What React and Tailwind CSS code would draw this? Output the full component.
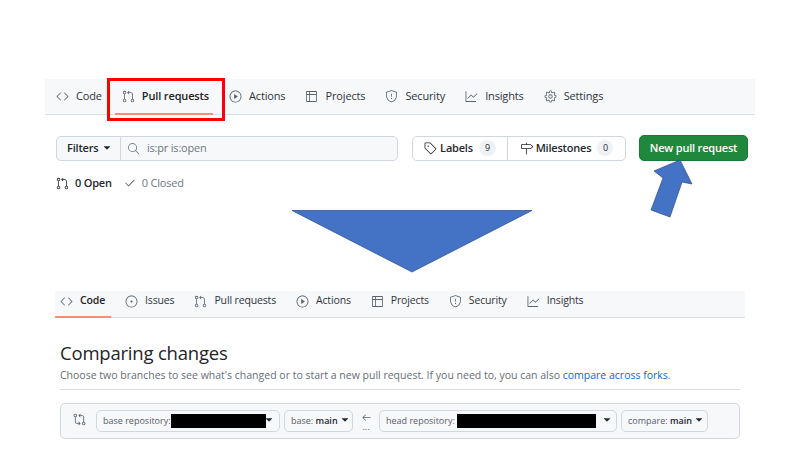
import React from "react";
import { GoCode, GoGitPullRequest, GoPlay, GoTable, GoShield, GoGraph, GoGear, GoIssueOpened, GoTag, GoMilestone, GoSearch, GoCheck, GoArrowLeft, GoGitCompare, GoTriangleDown } from "react-icons/go";

const Tab = ({ icon: Icon, label, bold, size = 13 }) => (
  <div className="flex items-center gap-[7px] text-[#2f353c] whitespace-nowrap">
    <Icon size={size} className="text-[#5a626b] shrink-0" />
    <span className={bold ? "font-semibold text-[#1f2328]" : ""}>{label}</span>
  </div>
);

const Caret = () => <GoTriangleDown size={12} className="text-[#24292f] shrink-0" />;
const SmallCaret = () => <GoTriangleDown size={12} className="text-[#24292f] shrink-0 -mt-[3px]" />;

export default function App() {
  return (
    <div className="relative w-[800px] h-[450px] bg-white overflow-hidden flex flex-col" style={{ fontFamily: '"Open Sans", "Noto Sans", sans-serif' }}>
      <section className="mt-[79px] mx-[45px] w-[710px]">
        <nav className="h-[36px] bg-[#f6f8fa] border-b border-[#d8dee4] flex items-center gap-[20px] pl-[11px] text-[11px] tracking-[-0.15px]">
          <Tab icon={GoCode} label="Code" />
          <Tab icon={GoGitPullRequest} label="Pull requests" bold />
          <Tab icon={GoPlay} label="Actions" />
          <Tab icon={GoTable} label="Projects" />
          <Tab icon={GoShield} label="Security" />
          <Tab icon={GoGraph} label="Insights" />
          <Tab icon={GoGear} label="Settings" />
        </nav>
        <div className="mt-[20px] flex items-center pl-[11px] text-[11px] tracking-[-0.2px] whitespace-nowrap">
          <div className="w-[342px] h-[25px] flex rounded-[5px] border border-[#d0d7de] bg-[#f6f8fa]">
            <div className="w-[64px] flex items-center gap-[3px] pl-[10px] border-r border-[#d0d7de] font-semibold text-[#24292f]">
              Filters <Caret />
            </div>
            <div className="flex items-center gap-[7px] pl-[6px] text-[#6e7781]">
              <GoSearch size={13} />
              <span>is:pr is:open</span>
            </div>
          </div>
          <div className="ml-[14px] w-[214px] h-[25px] flex rounded-[5px] border border-[#d0d7de] font-semibold text-[#24292f]">
            <div className="w-[95px] flex items-center justify-center gap-[3px] border-r border-[#d0d7de]">
              <GoTag size={13} />
              <span>Labels</span>
              <span className="ml-[3px] w-[17px] h-[16px] rounded-full bg-[#eff2f5] flex items-center justify-center text-[9px] font-normal">9</span>
            </div>
            <div className="flex-1 flex items-center justify-center gap-[3px]">
              <GoMilestone size={13} />
              <span>Milestones</span>
              <span className="ml-[3px] w-[16px] h-[16px] rounded-full bg-[#eff2f5] flex items-center justify-center text-[9px] font-normal">0</span>
            </div>
          </div>
          <button className="ml-[13px] w-[109px] h-[26px] rounded-[5px] bg-[#1f883d] text-white font-semibold border border-[#1c7a37]">New pull request</button>
        </div>
        <div className="mt-[13px] ml-[11px] flex items-center h-[18px] text-[11px] tracking-[-0.2px]">
          <GoGitPullRequest size={13} className="text-[#24292f]" />
          <span className="ml-[6px] font-semibold text-[#24292f]">0 Open</span>
          <GoCheck size={12} className="ml-[12px] text-[#5a626b]" />
          <span className="ml-[6px] text-[#6e7781]">0 Closed</span>
        </div>
      </section>

      <section className="mt-[99px] mx-[55px] w-[690px]">
        <nav className="h-[27px] bg-[#f6f8fa] border-b border-[#d8dee4] flex items-center gap-[20px] pl-[5px] text-[10.5px] tracking-[-0.15px] pb-[6px] relative">
          <Tab icon={GoCode} label="Code" bold />
          <Tab icon={GoIssueOpened} label="Issues" />
          <Tab icon={GoGitPullRequest} label="Pull requests" />
          <Tab icon={GoPlay} label="Actions" />
          <Tab icon={GoTable} label="Projects" />
          <Tab icon={GoShield} label="Security" />
          <Tab icon={GoGraph} label="Insights" />
          <div className="absolute left-0 bottom-[-1px] w-[56px] h-[2px] bg-[#fd8c73]" />
        </nav>
        <div className="mx-[5px]">
          <h1 className="mt-[21px] text-[18.5px] tracking-[-0.2px] leading-[28px] text-[#1f2328]">Comparing changes</h1>
          <p className="text-[10.5px] leading-[16px] text-[#656d76] whitespace-nowrap">
            Choose two branches to see what's changed or to start a new pull request. If you need to, you can also{" "}
            <span className="text-[#0969da]">compare across forks</span>.
          </p>
          <div className="mt-[6px] border-t border-[#d8dee4]" />
          <div className="mt-[13px] h-[36px] rounded-[5px] border border-[#d0d7de] bg-[#f6f8fa] flex items-center pl-[12px] text-[9px] text-[#57606a] whitespace-nowrap">
            <GoGitCompare size={13} className="text-[#57606a] mr-[10px] -mt-[3px]" />
            <div className="w-[184px] h-[22px] rounded-[5px] border border-[#d0d7de] flex items-center pl-[6px]">
              <span>base repository:</span>
              <span className="w-[95px] h-[14px] bg-black shrink-0" />
              <span className="-ml-[3px] flex"><SmallCaret /></span>
            </div>
            <div className="ml-[4px] w-[69px] h-[22px] rounded-[5px] border border-[#d0d7de] flex items-center pl-[6px] gap-[1px]">
              <span>base: <b className="font-semibold text-[#24292f]">main</b></span>
              <SmallCaret />
            </div>
            <div className="w-[26px] flex flex-col items-center leading-[8px] text-[#57606a]">
              <GoArrowLeft size={11} />
              <span>...</span>
            </div>
            <div className="w-[238px] h-[22px] rounded-[5px] border border-[#d0d7de] flex items-center pl-[6px]">
              <span>head repository:</span>
              <span className="ml-[2px] w-[139px] h-[14px] bg-black shrink-0" />
              <span className="ml-[5px] flex"><SmallCaret /></span>
            </div>
            <div className="ml-[4px] w-[87px] h-[22px] rounded-[5px] border border-[#d0d7de] flex items-center pl-[6px] gap-[1px]">
              <span>compare: <b className="font-semibold text-[#24292f]">main</b></span>
              <SmallCaret />
            </div>
          </div>
        </div>
      </section>

      <div className="absolute left-[107px] top-[78px] w-[118px] h-[43px] border-[3px] border-[#ff0000]" />
      <div className="absolute left-[115px] top-[113px] w-[98px] h-[2px] bg-[#fd8c73]" />
      <svg className="absolute left-0 top-0" width="800" height="450" viewBox="0 0 800 450">
        <polygon points="292,210.5 532,210.5 412,272" fill="#4472c4" stroke="#2f528f" strokeWidth="0.75" />
        <polygon points="680,160 692,184 682,182 670,217 651,210 663,178 654,171" fill="#4472c4" stroke="#2f528f" strokeWidth="0.75" />
      </svg>
    </div>
  );
}
